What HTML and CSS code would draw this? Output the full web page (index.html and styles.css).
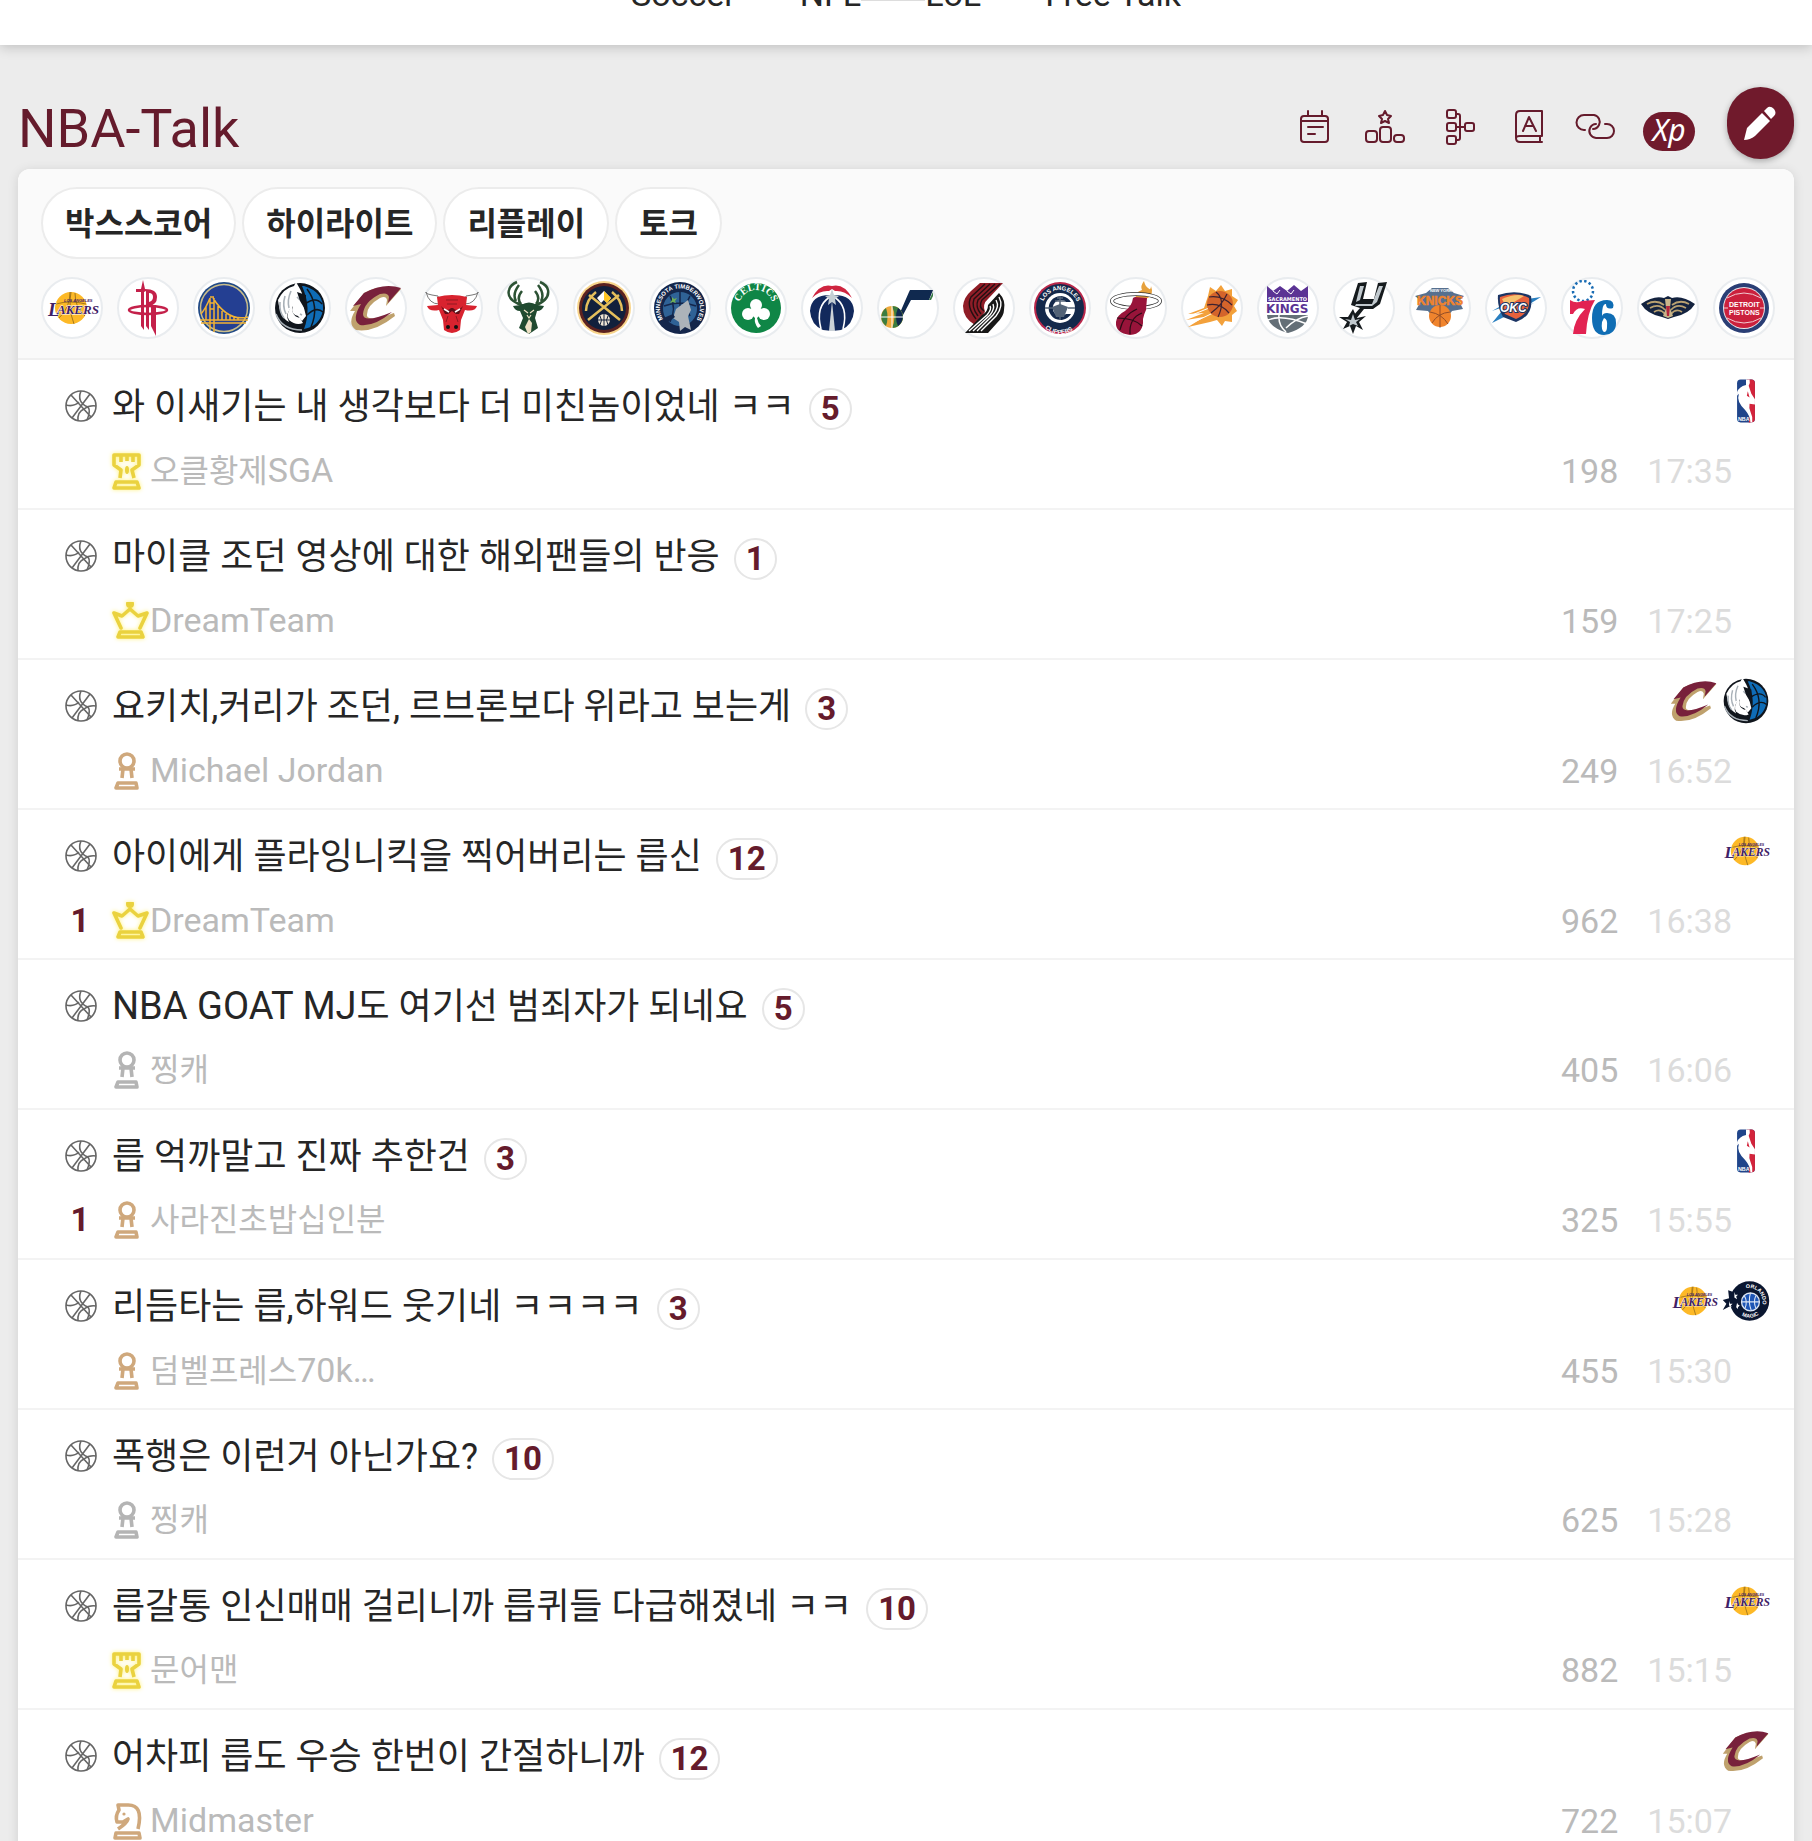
FILE: index.html
```
<!DOCTYPE html>
<html lang="ko">
  <head>
    <meta charset="utf-8">
    <meta name="viewport" content="width=device-width, initial-scale=1.0">
    <title>NBA-Talk</title>
    <link rel="stylesheet" href="styles.css">
  </head>
  <body>
    <!-- 목록 아이콘 -->
    <svg class="sprite" width="0" height="0" aria-hidden="true">
      <symbol id="ball" viewBox="0 0 32 32">
        <g fill="none" stroke="#666" stroke-width="1.6">
          <circle cx="16" cy="16" r="15"/>
          <path d="M6 5L26 27M25 4L7 28M16 1C13 8 15 14 23 17Q26 21 22 30M1 15Q9 17 14 12M13 31Q12 22 19 19Q24 15 31 16"/>
        </g>
      </symbol>
      <symbol id="rook" viewBox="0 0 38 38">
        <g fill="none" stroke="currentColor" stroke-width="3.6" stroke-linejoin="round">
          <path d="M8 26L9 18L2 13V3H27V13L20 18L22 26M9 3V10M15 3V9M21 3V10"/>
          <path d="M4 30H25L27 36H2Z"/>
        </g>
        <ellipse cx="15" cy="18" rx="2" ry="4" fill="currentColor"/>
      </symbol>
      <symbol id="queen" viewBox="0 2 38 38">
        <g fill="none" stroke="currentColor" stroke-width="3.6" stroke-linejoin="round" stroke-linecap="round">
          <path d="M9 28L2 13L10 16L18 9L26 16L35 13L28 28"/>
          <path d="M8 32H29L31 37H6Z"/>
        </g>
        <circle cx="18" cy="4" r="4" fill="currentColor"/>
      </symbol>
      <symbol id="pawn" viewBox="0 0 38 38">
        <g fill="none" stroke="currentColor" stroke-width="3.6" stroke-linejoin="round">
          <circle cx="15" cy="9" r="7"/>
          <path d="M7 17H23M11 17L10 26M19 17L20 26M6 31H24L25 36H4Z"/>
        </g>
      </symbol>
      <symbol id="knight" viewBox="0 0 38 38">
        <g fill="none" stroke="currentColor" stroke-width="3.6" stroke-linejoin="round">
          <path d="M26 27Q32 2 15 3H6L7 8Q3 14 5 20H11L16 17Q15 21 6 27M4 31H27L28 36H3Z"/>
        </g>
        <circle cx="12" cy="12" r="1.6" fill="currentColor"/>
      </symbol>
    </svg>

    <header class="top">
      <nav>
        <a href="#soccer">Soccer</a>
        <a href="#nfl" class="line">NFL</a>
        <a href="#lol">LoL</a>
        <a href="#free">Free Talk</a>
      </nav>
    </header>

    <main>
      <div class="board-head">
        <h1>NBA-Talk</h1>
        <div class="tools">
          <a href="#schedule" aria-label="일정">
            <svg width="40" height="40" viewBox="3 0 40 40"><path d="M9 11Q6 11 6 14V34Q6 37 9 37H30Q33 37 33 34V14Q33 11 30 11ZM6 16H33M13 6V10M27 6V10M13 22H28M13 29H20"/></svg>
          </a>
          <a href="#rank" aria-label="순위">
            <svg width="40" height="40" viewBox="2 0 40 40"><rect x="1" y="26" width="11" height="11" rx="3"/><rect x="15" y="22" width="11" height="15" rx="3"/><rect x="29" y="30" width="10" height="7" rx="3"/><path d="M20 6L22 10L26 11L23 14L24 18L20 16L16 18L17 14L14 11L18 10Z"/></svg>
          </a>
          <a href="#bracket" aria-label="대진표">
            <svg width="40" height="40" viewBox="-4 0 40 40"><rect x="7" y="5" width="9" height="8" rx="2"/><rect x="7" y="18" width="9" height="8" rx="2"/><rect x="7" y="31" width="9" height="8" rx="2"/><rect x="25" y="18" width="9" height="8" rx="2"/><path d="M16 9H18Q20 9 20 11V33Q20 35 18 35H16M16 22H25"/></svg>
          </a>
          <a href="#book" aria-label="용어">
            <svg width="40" height="40" viewBox="-4 0 40 40"><path d="M33 31V6H11Q7 6 7 10V33Q7 37 11 37H33M7 33Q7 31 11 31H33M31 31V37M14 26L20 12L27 26M16 21H24"/></svg>
          </a>
          <a href="#link" aria-label="링크">
            <svg width="40" height="40" viewBox="0 0 40 40"><path d="M11 25H10A7 7 0 0 1 10 10H20A7 7 0 0 1 25 20Q23 24 19 24M31 19H33A7 7 0 0 1 33 33H22A7 7 0 0 1 16 23Q18 19 22 19"/></svg>
          </a>
          <a href="#xp" class="xp">Xp</a>
          <button type="button" class="write" aria-label="글쓰기">
            <svg width="40" height="40" viewBox="0 0 40 40"><path d="M3 37L6 25L21 10L29 18L14 33Q9 37 3 37Z"/><path d="M23 8L26 5Q29 2 33 6Q36 10 33 13L30 16Z"/></svg>
          </button>
        </div>
      </div>

      <section class="board">
        <div class="filters">
          <div class="chips">
            <button type="button">박스스코어</button>
            <button type="button">하이라이트</button>
            <button type="button">리플레이</button>
            <button type="button">토크</button>
          </div>
          <!-- 팀 로고 -->
          <div class="teams">
            <a href="#lakers" aria-label="Lakers"><svg viewBox="0 0 56 56"><g id="lal">
              <circle cx="27" cy="28" r="16" fill="#fdb927"/>
              <path d="M27 12Q24 28 30 44M12 24Q26 20 42 24M15 38Q26 28 26 12M41 36Q31 28 31 13" fill="none" stroke="#7d5a17" stroke-width=".7"/>
              <text x="4" y="36" font-family="Liberation Serif" font-style="italic" font-weight="700" font-size="19" fill="#3f2167" stroke="#fff" stroke-width=".8" paint-order="stroke">L</text>
              <text x="13" y="34" font-family="Liberation Serif" font-style="italic" font-weight="700" font-size="13" fill="#3f2167" stroke="#fff" stroke-width=".8" paint-order="stroke">AKERS</text>
              <text x="20" y="22" font-family="Liberation Sans" font-weight="700" font-style="italic" font-size="4" fill="#3f2167">LOS ANGELES</text>
            </g></svg></a>
            <a href="#rockets" aria-label="Rockets"><svg viewBox="0 0 56 56">
              <g fill="#c4204a">
                <path d="M21 46V12H16V9H21L23 0L25 9Q37 9 37 17Q37 25 29 26V50L26 46V11L24 12V50Z"/>
                <path d="M29 13Q33 13 33 17Q33 21 29 22Z" fill="#fff"/>
                <path d="M31 25H36V56L33 50L31 46Z"/>
              </g>
              <ellipse cx="28" cy="30" rx="19" ry="4" fill="none" stroke="#c4204a" stroke-width="2.500"/>
            </svg></a>
            <a href="#warriors" aria-label="Warriors"><svg viewBox="0 0 56 56">
              <circle cx="28" cy="28" r="26" fill="#214a86"/>
              <circle cx="28" cy="28" r="23.500" fill="#243f92" stroke="#c9bd8b" stroke-width="1.500"/>
              <path d="M4 40H52M5 43H50M14 50V18M18 52V18M14 17H18M14 23H18M14 29H18M17 18Q32 42 52 37M14 18Q10 28 5 34M22 26V40M26 31V40M30 34V40M34 36V40M38 37V40M42 38V40M10 27V40" fill="none" stroke="#f2b233" stroke-width="1.500"/>
            </svg></a>
            <a href="#mavericks" aria-label="Mavericks"><svg viewBox="0 0 56 56"><g id="dal">
              <circle cx="28" cy="28" r="25" fill="#10151c"/>
              <path d="M32 6Q52 12 51 30Q48 46 32 49Q40 28 30 6Z" fill="#0f6cb6"/>
              <path d="M35 9Q48 26 39 47M33 24Q44 16 50 24M35 35Q44 26 51 32" fill="none" stroke="#10151c" stroke-width="1.500"/>
              <path d="M6 20Q12 8 22 6L24 2L28 9Q32 16 31 24L34 36L30 41L26 36Q18 34 21 26Q12 34 17 42Q8 38 6 20Z" fill="#fff"/>
              <path d="M4 34Q10 50 30 50M8 22Q7 32 12 38M13 16Q10 26 14 34M19 11Q15 20 17 28M25 17L28 20M28 34L30 35" fill="none" stroke="#a9b1b8" stroke-width="1.600"/>
              <path d="M21 24Q18 36 28 38L31 43Q24 46 17 40Q13 34 21 24Z" fill="#fff"/>
              <path d="M25 12L34 15L34 31L28 21Z" fill="#10151c"/>
            </g></svg></a>
            <a href="#cavaliers" aria-label="Cavaliers"><svg viewBox="0 0 56 56"><g id="cle">
              <path d="M53 9L38 26L39 20Q38 15 32 18Q18 26 19 36Q21 42 46 33L47 36Q26 53 8 50Q-1 44 7 31L2 31L16 13Q34 3 53 9Z" fill="#bfa16d"/>
              <path d="M53 8L40 23L41 17Q40 12 32 14Q16 22 15 34Q15 44 44 32Q26 47 12 45Q3 40 13 24L5 26L16 13Q36 2 53 8Z" fill="#78213b"/>
            </g></svg></a>
            <a href="#bulls" aria-label="Bulls"><svg viewBox="0 0 56 56">
              <path d="M14 16Q0 14 2 12Q5 24 15 24ZM42 16Q56 14 54 12Q51 24 41 24Z" fill="#fff" stroke="#777" stroke-width="1"/>
              <path d="M13 17Q28 13 43 17L42 25L53 26Q51 32 41 30L37 40L36 50Q28 56 20 50L19 40L15 30Q5 32 3 26L14 25Z" fill="#d8232f"/>
              <path d="M17 26Q23 33 27 28H29Q33 33 39 26L35 34H32L28 31L24 34H21Z" fill="#5e0f17"/>
              <path d="M20 29L25 32M36 29L31 32" stroke="#fff" stroke-width="1.500"/>
              <path d="M22 20H34M23 24H33M24 36L22 42M32 36L34 42" stroke="#911a22" stroke-width="1"/>
              <ellipse cx="24" cy="47" rx="2" ry="2" fill="#111"/><ellipse cx="32" cy="47" rx="2" ry="2" fill="#111"/>
            </svg></a>
            <a href="#bucks" aria-label="Bucks"><svg viewBox="0 0 56 56">
              <g fill="none" stroke="#2c5234" stroke-width="2.500">
                <path d="M24 26Q6 20 9 10Q10 5 17 2M34 26Q50 20 48 10Q47 5 40 2M16 21Q12 14 19 5M41 21Q45 14 38 5M21 24Q16 18 22 11M36 24Q41 18 35 11"/>
              </g>
              <path d="M21 25Q29 20 37 25L44 26Q42 31 37 31L35 38L38 48L29 54L19 48L23 38L20 31Q15 31 13 26Z" fill="#204a30"/>
              <path d="M29 39L32 43L31 52L28 54L25 47Z" fill="#eee1c6"/>
              <path d="M24 30L28 33M34 30L30 33M27 35L29 38L31 35" fill="none" stroke="#eee1c6" stroke-width="1.200"/>
            </svg></a>
            <a href="#nuggets" aria-label="Nuggets"><svg viewBox="0 0 56 56">
              <circle cx="28" cy="28" r="27" fill="#f8d58c"/>
              <circle cx="28" cy="28" r="25" fill="#5c2220"/>
              <circle cx="28" cy="28" r="22" fill="#12203c"/>
              <path d="M21 18L28 11L35 18L31 23L28 20L25 23Z" fill="#fff"/>
              <path d="M28 11L35 18L31 23L28 20Z" fill="#fec524"/>
              <path d="M12 40L43 15M44 40L13 15M10 31Q10 20 20 12M46 31Q46 20 36 12" fill="none" stroke="#e5bf5c" stroke-width="2.500"/>
              <circle cx="28" cy="40" r="6" fill="#efe5d4"/>
              <path d="M28 34V46M22 40H34M24 36Q27 40 24 45M32 36Q29 40 32 45" fill="none" stroke="#12203c" stroke-width="1"/>
            </svg></a>
            <a href="#timberwolves" aria-label="Timberwolves"><svg viewBox="0 0 56 56">
              <circle cx="28" cy="28" r="26" fill="#14264b"/>
              <circle cx="28" cy="29" r="17" fill="#2f6296"/>
              <path d="M28 12V30M12 26Q28 20 44 26M18 16Q25 28 18 42M38 16Q32 25 38 36" fill="none" stroke="#14264b" stroke-width="1.500"/>
              <path d="M36 20L39 30L36 36L39 50L33 47L28 51L27 42L21 38L24 29Z" fill="#adb3b9"/>
              <path d="M9 39L21 34L23 37L16 42Z" fill="#14264b"/>
              <path d="M20 17L22 19L25 18L23 21L24 23L21 22L18 23L20 20Z" fill="#6fae55"/>
              <path id="min-arc" d="M11 39A20 20 0 1 1 39 45" fill="none"/>
              <text font-family="Liberation Sans" font-weight="700" font-size="6" fill="#fff"><textPath href="#min-arc">MINNESOTA TIMBERWOLVES</textPath></text>
            </svg></a>
            <a href="#celtics" aria-label="Celtics"><svg viewBox="0 0 56 56">
              <circle cx="28" cy="28" r="25" fill="#0f8646"/>
              <path id="bos-arc" d="M11 27A17 17 0 0 1 45 27" fill="none"/>
              <text font-family="Liberation Serif" font-weight="700" font-size="10" fill="#fff"><textPath href="#bos-arc" startOffset="5">CELTICS</textPath></text>
              <g fill="#fff">
                <circle cx="28" cy="25" r="6"/><circle cx="20" cy="34" r="6"/><circle cx="36" cy="34" r="6"/>
                <path d="M24 26H32L34 33L29 38Q30 43 33 46L30 48Q26 43 27 38L22 33Z"/>
              </g>
            </svg></a>
            <a href="#wizards" aria-label="Wizards"><svg viewBox="0 0 56 56">
              <path d="M28 15Q49 14 50 31Q49 45 37 50L28 51L19 50Q7 45 6 31Q7 14 28 15Z" fill="#12295c"/>
              <path d="M8 18Q16 3 28 6Q40 3 48 18Q40 10 31 11L28 9L25 11Q16 10 8 18Z" fill="#cf2540"/>
              <path d="M26 17Q11 26 17 49M30 17Q45 26 39 49" fill="none" stroke="#fff" stroke-width="1.600"/>
              <path d="M28 21L31 51H25Z" fill="#cbd2d8"/>
              <path d="M28 9L30 15L35 16L31 19L32 25L28 22L24 25L25 19L21 16L26 15Z" fill="#c4ced4"/>
            </svg></a>
            <a href="#jazz" aria-label="Jazz"><svg viewBox="0 0 56 56">
              <path d="M30 10H53L49 20H31L23 35H19L29 12Z" fill="#10294f"/>
              <path d="M49 20L53 12V16L51 20Z" fill="#367a45"/>
              <circle cx="12" cy="37" r="11" fill="#efa93c"/>
              <path d="M12 26A11 11 0 0 1 12 48Q17 37 12 26Z" fill="#3c7d3f"/>
              <path d="M18 28A11 11 0 0 1 18 46Q14 37 18 28Z" fill="#10294f"/>
              <path d="M6 28A11 11 0 0 0 6 46Q9 37 6 28Z" fill="#3c7d3f"/>
              <path d="M1 37H23M12 26V48" stroke="#fff" stroke-width="1"/>
            </svg></a>
            <a href="#blazers" aria-label="Trail Blazers"><svg viewBox="0 0 56 56">
              <path d="M24 3H47L32 19Q26 24 29 32L19 45Q7 38 7 26Q8 17 15 11Z" fill="#8f1d27"/>
              <path d="M32 25L43 13Q50 20 48 30Q48 36 41 43L32 53H9L26 35Q32 32 32 25Z" fill="#181818"/>
              <path d="M29 4L15 17Q10 26 20 39M34 4L18 19Q15 27 22 36M39 4L22 20Q19 27 25 34M44 4L26 20Q22 27 28 31" fill="none" stroke="#240f12" stroke-width="1.400"/>
              <path d="M43 17Q48 26 40 36L25 51M40 20Q44 27 37 35L21 51M37 24Q39 29 34 35L17 51M34 26Q36 29 31 35L13 51" fill="none" stroke="#fff" stroke-width="1.400"/>
            </svg></a>
            <a href="#clippers" aria-label="Clippers"><svg viewBox="0 0 56 56">
              <circle cx="28" cy="28" r="26" fill="#b9284b"/>
              <circle cx="28" cy="28" r="24" fill="#14294b"/>
              <circle cx="28" cy="28" r="15" fill="#fff"/>
              <path d="M39 22A12 12 0 1 0 39 34H34A8 8 0 1 1 34 22Z" fill="#14294b"/>
              <path d="M20 27L28 24L36 27L32 37H24Z" fill="#536377"/>
              <path d="M28 16V40M23 21H33M25 18H31M13 28H20M36 28H43" stroke="#536377" stroke-width="1.500"/>
              <path id="lac-top" d="M10 28A18 18 0 0 1 46 28" fill="none"/>
              <path id="lac-low" d="M6 32A22 22 0 0 0 50 32" fill="none"/>
              <text font-family="Liberation Sans" font-weight="700" font-size="6" fill="#fff"><textPath href="#lac-top" startOffset="7">LOS ANGELES</textPath></text>
              <text font-family="Liberation Sans" font-weight="700" font-size="6" fill="#fff"><textPath href="#lac-low" startOffset="18">CLIPPERS</textPath></text>
            </svg></a>
            <a href="#heat" aria-label="Heat"><svg viewBox="0 0 56 56">
              <path d="M28 20Q26 12 34 10Q32 6 36 1Q37 6 40 8Q43 11 43 6Q46 14 40 18Z" fill="#e6a13d"/>
              <ellipse cx="28" cy="21" rx="24" ry="7" fill="none" stroke="#333" stroke-width="4"/>
              <ellipse cx="28" cy="21" rx="24" ry="7" fill="none" stroke="#fff" stroke-width="2.500"/>
              <path d="M27 17L39 18L38 30Q36 34 35 39Q36 54 22 55Q7 53 8 42Q9 35 17 31Q24 26 25 18Z" fill="#98143a"/>
              <path d="M9 38Q26 38 34 46M12 50Q15 35 29 29M22 54Q21 38 34 33" fill="none" stroke="#2a0b15" stroke-width="1.200"/>
            </svg></a>
            <a href="#suns" aria-label="Suns"><svg viewBox="0 0 56 56">
              <path d="M24 16L26 7L32 11L37 5L41 11L48 9L48 16L54 20L50 26L53 31L48 35V42L41 41L38 46L33 40L26 42L4 47L20 37L2 40L20 33L4 34L20 28Z" fill="#f3a13b"/>
              <path d="M6 44L29 33M3 37L25 28" stroke="#fff" stroke-width="1"/>
              <circle cx="36" cy="24" r="13" fill="#d4642b"/>
              <path d="M25 17Q38 15 48 25M23 25Q36 22 45 33M32 12Q42 20 34 37M43 14Q38 25 27 33" fill="none" stroke="#3c2230" stroke-width="1.200"/>
            </svg></a>
            <a href="#kings" aria-label="Kings"><svg viewBox="0 0 56 56">
              <path d="M7 6L13 11L20 6L27 11L34 5L41 11L48 6V22H7Z" fill="#5b3394"/>
              <path d="M13 11L17 14L20 10M27 11L31 14L34 10" fill="none" stroke="#fff" stroke-width="1"/>
              <text x="8" y="21" font-family="DejaVu Sans" font-weight="700" font-size="5" fill="#fff">SACRAMENTO</text>
              <text x="6" y="33" font-family="DejaVu Sans" font-weight="700" font-size="12" fill="#5b3394">KINGS</text>
              <path d="M7 35H48Q48 47 28 53Q8 47 7 35Z" fill="#646f77"/>
              <path d="M8 40Q22 34 47 44M19 35Q18 45 26 52M48 36Q36 38 26 48" fill="none" stroke="#fff" stroke-width="1.500"/>
            </svg></a>
            <a href="#spurs" aria-label="Spurs"><svg viewBox="0 0 56 56">
              <path d="M22 3L31 2L27 19H38L42 3L51 2L44 24L37 29H28L20 39L17 36L24 28L15 25Z" fill="#151a1d"/>
              <path d="M24 6H28L24 20L20 22ZM43 6H47L41 22L36 26H19L20 24H36Z" fill="#c1c9ce"/>
              <path d="M17 29L21 38L30 36L23 42L27 50L20 46L17 54L14 46L7 49L11 42L3 37L12 37Z" fill="#151a1d"/>
              <path d="M17 34L19 40L24 39L20 42L22 46L17 44L13 46L14 42L9 39L15 40Z" fill="#c1c9ce"/>
            </svg></a>
            <a href="#knicks" aria-label="Knicks"><svg viewBox="0 0 56 56">
              <path d="M3 16L14 13L20 8H36L42 13L52 16L47 21L51 29L40 31L28 48L16 31L4 30L9 21Z" fill="#56708f"/>
              <circle cx="28" cy="36" r="11" fill="#f0842d"/>
              <path d="M28 25V47M18 32Q30 34 36 44M38 32Q26 33 20 43" fill="none" stroke="#934d27" stroke-width="1"/>
              <text x="5" y="25" font-family="Liberation Sans" font-weight="700" font-size="12" fill="#ef832e" stroke="#ef832e" stroke-width=".600">KNICKS</text>
              <text x="18" y="12" font-family="Liberation Sans" font-weight="700" font-size="4" fill="#fff">NEW YORK</text>
            </svg></a>
            <a href="#thunder" aria-label="Thunder"><svg viewBox="0 0 56 56">
              <path d="M4 43L18 26L4 31L20 22L53 17L40 25L46 23L18 36Z" fill="#2a7fc0"/>
              <path d="M10 15Q28 9 43 16Q46 36 28 42L15 37Q9 26 10 15Z" fill="#1c3564"/>
              <path d="M12 17Q28 11 41 18Q43 33 28 39L17 34Q11 26 12 17Z" fill="#e8613c"/>
              <path d="M14 19Q28 13 36 16L18 27Z" fill="#f6c26f"/>
              <text x="12" y="32" font-family="Liberation Sans" font-style="italic" font-weight="700" font-size="12" fill="#fff" stroke="#1c3564" stroke-width="2" paint-order="stroke">OKC</text>
            </svg></a>
            <a href="#sixers" aria-label="76ers"><svg viewBox="0 0 56 56">
              <circle cx="19" cy="11" r="10" fill="none" stroke="#1b6db4" stroke-width="2.500" stroke-dasharray="2.400 2.400"/>
              <path d="M6 20Q12 24 18 21L31 20Q23 33 22 54H9Q10 40 21 29Q13 26 9 34H6Z" fill="#e22352"/>
              <path d="M49 28Q51 20 43 20Q28 20 28 38Q28 55 40 55Q52 54 52 43Q52 33 43 33Q39 33 38 36Q38 23 42 24Q42 30 49 28ZM40 38Q44 39 43 47Q43 52 40 52Q37 50 38 42Z" fill="#0f6db4" fill-rule="evenodd"/>
            </svg></a>
            <a href="#pelicans" aria-label="Pelicans"><svg viewBox="0 0 56 56">
              <path d="M1 24Q14 15 24 18L28 16L32 18Q42 15 55 24Q49 34 34 37L28 39L22 37Q7 34 1 24Z" fill="#14233f"/>
              <path d="M7 24Q16 19 24 25M10 28Q19 23 25 30M14 32Q20 28 25 34M49 24Q40 19 32 25M46 28Q37 23 31 30M42 32Q36 28 31 34" fill="none" stroke="#b8a070" stroke-width="1.800"/>
              <path d="M25 19H31L30 28L33 36L28 38L23 36L26 28Z" fill="#c9b58b"/>
              <path d="M26 26H30L29 36H27Z" fill="#b3263d"/>
            </svg></a>
            <a href="#pistons" aria-label="Pistons"><svg viewBox="0 0 56 56">
              <circle cx="28" cy="28" r="25" fill="#2a3e75"/>
              <circle cx="28" cy="28" r="21" fill="#e8e4e8"/>
              <circle cx="28" cy="28" r="20" fill="#cb203c"/>
              <path d="M11 18Q28 8 45 18M11 38Q28 48 45 38M8 28H12M44 28H48" fill="none" stroke="#f2c9d0" stroke-width="1"/>
              <g font-family="Liberation Sans" font-weight="700" font-size="7" fill="#fff"><text x="13" y="27">DETROIT</text><text x="13" y="35">PISTONS</text></g>
            </svg></a>
          </div>
        </div>

        <ul class="posts">
          <li>
            <div class="subject">
              <svg class="ball"><use href="#ball"/></svg>
              <a href="#p1">와 이새기는 내 생각보다 더 미친놈이었네 ㅋㅋ</a><span class="reply">5</span>
              <span class="logos"><svg viewBox="0 0 56 56"><g id="nba">
                <rect x="18" y="4" width="20" height="48" rx="4" fill="#20458a"/>
                <path d="M29 4H34Q38 4 38 8V48Q38 52 34 52H31L33 42L30 30Z" fill="#d3233b"/>
                <path d="M28 4H32Q33 8 31 11L34 20L38 26V32L32 31Q31 36 33 40Q36 46 35 52H33Q33 45 27 38Q17 29 20 20L18 22V18Q20 12 28 10Z" fill="#fff"/>
                <path d="M30 17L32 24L29 22Z" fill="#d3233b"/>
                <text x="19" y="50" font-family="Liberation Sans" font-weight="700" font-size="6" fill="#fff">NBA</text>
              </g></svg></span>
            </div>
            <div class="info">
              <b class="vote"></b><svg class="rank gold"><use href="#rook"/></svg><span class="name">오클황제<span class="en">SGA</span></span>
              <span class="views">198</span><time>17:35</time>
            </div>
          </li>
          <li>
            <div class="subject">
              <svg class="ball"><use href="#ball"/></svg>
              <a href="#p2">마이클 조던 영상에 대한 해외팬들의 반응</a><span class="reply">1</span>
            </div>
            <div class="info">
              <b class="vote"></b><svg class="rank gold"><use href="#queen"/></svg><span class="name"><span class="en">DreamTeam</span></span>
              <span class="views">159</span><time>17:25</time>
            </div>
          </li>
          <li>
            <div class="subject">
              <svg class="ball"><use href="#ball"/></svg>
              <a href="#p3">요키치,커리가 조던, 르브론보다 위라고 보는게</a><span class="reply">3</span>
              <span class="logos"><svg viewBox="0 0 56 56"><use href="#cle"/></svg><svg viewBox="0 0 56 56"><use href="#dal"/></svg></span>
            </div>
            <div class="info">
              <b class="vote"></b><svg class="rank bronze"><use href="#pawn"/></svg><span class="name"><span class="en">Michael Jordan</span></span>
              <span class="views">249</span><time>16:52</time>
            </div>
          </li>
          <li>
            <div class="subject">
              <svg class="ball"><use href="#ball"/></svg>
              <a href="#p4">아이에게 플라잉니킥을 찍어버리는 릅신</a><span class="reply">12</span>
              <span class="logos"><svg viewBox="0 0 56 56"><use href="#lal"/></svg></span>
            </div>
            <div class="info">
              <b class="vote">1</b><svg class="rank gold"><use href="#queen"/></svg><span class="name"><span class="en">DreamTeam</span></span>
              <span class="views">962</span><time>16:38</time>
            </div>
          </li>
          <li>
            <div class="subject">
              <svg class="ball"><use href="#ball"/></svg>
              <a href="#p5"><span class="en">NBA GOAT MJ</span>도 여기선 범죄자가 되네요</a><span class="reply">5</span>
            </div>
            <div class="info">
              <b class="vote"></b><svg class="rank silver"><use href="#pawn"/></svg><span class="name">찡캐</span>
              <span class="views">405</span><time>16:06</time>
            </div>
          </li>
          <li>
            <div class="subject">
              <svg class="ball"><use href="#ball"/></svg>
              <a href="#p6">릅 억까말고 진짜 추한건</a><span class="reply">3</span>
              <span class="logos"><svg viewBox="0 0 56 56"><use href="#nba"/></svg></span>
            </div>
            <div class="info">
              <b class="vote">1</b><svg class="rank bronze"><use href="#pawn"/></svg><span class="name">사라진초밥십인분</span>
              <span class="views">325</span><time>15:55</time>
            </div>
          </li>
          <li>
            <div class="subject">
              <svg class="ball"><use href="#ball"/></svg>
              <a href="#p7">리듬타는 릅,하워드 웃기네 ㅋㅋㅋㅋ</a><span class="reply">3</span>
              <span class="logos"><svg viewBox="0 0 56 56"><use href="#lal"/></svg><svg viewBox="0 0 56 56">
                <circle cx="32" cy="28" r="22" fill="#0a1630"/>
                <path d="M8 16L14 18L18 14L20 21L14 26L12 30L16 34L10 34L2 38L6 31L2 27L9 25Z" fill="#0a1630"/>
                <path d="M15 18L16 21L19 21L17 23L18 26L15 24ZM9 28L10 31L13 31L11 33L12 35L9 33ZM18 30L19 32L21 33L19 35V37L17 35Z" fill="#fff"/>
                <circle cx="33" cy="29" r="10" fill="#1d55b5" stroke="#dce6f5" stroke-width="1.500"/>
                <path d="M23 29H43M33 19Q30 29 34 39M26 22Q30 28 27 36M39 22Q36 29 39 36" fill="none" stroke="#dce6f5" stroke-width="1.200"/>
                <path id="orl-top" d="M28 14A15 15 0 0 1 46 33" fill="none"/>
                <path id="orl-low" d="M18 40A18 18 0 0 0 46 40" fill="none"/>
                <g font-family="Liberation Sans" font-weight="700" font-size="6" fill="#fff"><text><textPath href="#orl-top">ORLANDO</textPath></text><text><textPath href="#orl-low" startOffset="7">MAGIC</textPath></text></g>
              </svg></span>
            </div>
            <div class="info">
              <b class="vote"></b><svg class="rank bronze"><use href="#pawn"/></svg><span class="name">덤벨프레스<span class="en">70k…</span></span>
              <span class="views">455</span><time>15:30</time>
            </div>
          </li>
          <li>
            <div class="subject">
              <svg class="ball"><use href="#ball"/></svg>
              <a href="#p8">폭행은 이런거 아닌가요?</a><span class="reply">10</span>
            </div>
            <div class="info">
              <b class="vote"></b><svg class="rank silver"><use href="#pawn"/></svg><span class="name">찡캐</span>
              <span class="views">625</span><time>15:28</time>
            </div>
          </li>
          <li>
            <div class="subject">
              <svg class="ball"><use href="#ball"/></svg>
              <a href="#p9">릅갈통 인신매매 걸리니까 릅퀴들 다급해졌네 ㅋㅋ</a><span class="reply">10</span>
              <span class="logos"><svg viewBox="0 0 56 56"><use href="#lal"/></svg></span>
            </div>
            <div class="info">
              <b class="vote"></b><svg class="rank gold"><use href="#rook"/></svg><span class="name">문어맨</span>
              <span class="views">882</span><time>15:15</time>
            </div>
          </li>
          <li>
            <div class="subject">
              <svg class="ball"><use href="#ball"/></svg>
              <a href="#p10">어차피 릅도 우승 한번이 간절하니까</a><span class="reply">12</span>
              <span class="logos"><svg viewBox="0 0 56 56"><use href="#cle"/></svg></span>
            </div>
            <div class="info">
              <b class="vote"></b><svg class="rank bronze"><use href="#knight"/></svg><span class="name"><span class="en">Midmaster</span></span>
              <span class="views">722</span><time>15:07</time>
            </div>
          </li>
        </ul>
      </section>
    </main>
  </body>
</html>
```
FILE: styles.css
```
* {
  box-sizing: border-box;
}
html {
  height: 100%;
  overflow: hidden;
}
body {
  margin: 0;
  height: 100%;
  overflow: hidden;
  background: #ececec;
  color: #262626;
  font-family: Roboto, "Noto Sans CJK KR", sans-serif;
  font-size: 34px;
}
a {
  color: inherit;
  text-decoration: none;
}
button {
  font-family: inherit;
  cursor: pointer;
}
.sprite {
  position: absolute;
}
symbol {
  overflow: visible;
}

/* 상단 메뉴 */
.top {
  display: flex;
  align-items: flex-end;
  justify-content: center;
  height: 45px;
  padding-bottom: 31px;
  background: #fff;
  box-shadow: 0 2px 12px rgba(0, 0, 0, 0.2);
}
.top nav {
  display: flex;
  gap: 64px;
  line-height: 40px;
}
.line {
  position: relative;
}
.line::after {
  content: "";
  position: absolute;
  left: 100%;
  bottom: 13px;
  width: 64px;
  height: 2px;
  background: #ddd;
}

/* 게시판 제목 */
main {
  padding: 0 18px;
}
.board-head {
  display: flex;
  justify-content: space-between;
  height: 124px;
  padding-top: 42px;
}
h1 {
  margin: 0;
  padding-top: 12px;
  font-size: 54px;
  line-height: 60px;
  font-weight: 400;
  color: #651b2c;
}
.tools {
  display: flex;
  align-items: flex-start;
}
.tools a {
  margin: 18px 29px 0 0;
}
.tools svg {
  display: block;
  overflow: visible;
  fill: none;
  stroke: #651b2c;
  stroke-width: 2;
  stroke-linejoin: round;
  stroke-linecap: round;
}
.tools .xp {
  width: 52px;
  height: 39px;
  margin: 25px 32px 0 0;
  border-radius: 20px;
  background: #701a2c;
  color: #fff;
  font-family: "Noto Sans", sans-serif;
  font-size: 30px;
  line-height: 36px;
  font-style: italic;
  text-align: center;
}
.write {
  display: flex;
  align-items: center;
  justify-content: center;
  width: 67px;
  height: 72px;
  padding: 0;
  border: 0;
  border-radius: 36px;
  background: #701a2c;
  box-shadow: 0 2px 6px rgba(0, 0, 0, 0.3);
}
.tools .write svg {
  fill: #fff;
  stroke: none;
}

/* 목록 박스 */
.board {
  border-radius: 12px;
  background: #fff;
  box-shadow: 0 2px 12px rgba(0, 0, 0, 0.12);
}
.filters {
  padding: 18px 18px 19px 23px;
  border-bottom: 2px solid #f0f0f0;
  border-radius: 12px 12px 0 0;
  background: #fafafa;
}
.chips {
  display: flex;
  gap: 6px;
}
.chips button {
  height: 72px;
  padding: 0 22px 4px;
  border: 2px solid #ececec;
  border-radius: 36px;
  background: #fff;
  color: #262626;
  font-size: 32px;
  font-weight: 700;
}
.teams {
  display: flex;
  gap: 14px;
  margin-top: 18px;
  overflow: hidden;
}
.teams a {
  display: flex;
  flex: none;
  align-items: center;
  justify-content: center;
  width: 62px;
  height: 62px;
  border: 2px solid #e9ecef;
  border-radius: 50%;
  background: #fff;
}
.teams svg {
  flex: none;
  width: 56px;
  height: 56px;
}
.posts {
  margin: 0;
  padding: 0;
  list-style: none;
}
.posts li {
  height: 150px;
  padding: 16px 23px 0 44px;
  border-bottom: 2px solid #f3f3f3;
}
.subject {
  display: flex;
  align-items: flex-end;
  height: 54px;
  font-size: 36px;
  line-height: 46px;
}
.subject .en {
  font-size: 38px;
}
.ball {
  width: 32px;
  height: 32px;
  margin: 0 15px 8px 3px;
}
.reply {
  height: 42px;
  margin-left: 14px;
  padding: 0 10px;
  border: 2px solid #e6e6e6;
  border-radius: 21px;
  color: #651b2c;
  font-size: 33px;
  line-height: 38px;
  font-weight: 700;
}
.logos {
  display: flex;
  align-self: flex-start;
  gap: 2px;
  margin-left: auto;
}
.logos svg {
  width: 50px;
  height: 50px;
}
.info {
  display: flex;
  align-items: center;
  margin-top: 16px;
  line-height: 48px;
}
.vote {
  width: 36px;
  margin-right: 14px;
  color: #651b2c;
  font-size: 33px;
  text-align: center;
}
.rank {
  width: 38px;
  height: 38px;
}
.gold {
  color: #ead23f;
  filter: drop-shadow(0 0 2px #fff27a);
}
.bronze {
  color: #cfa87c;
}
.silver {
  color: #b4b4b4;
}
.name {
  color: #bababa;
  font-size: 32px;
}
.name .en {
  font-size: 34px;
}
.views {
  margin-left: auto;
  color: #bababa;
}
time {
  margin: 0 39px 0 29px;
  color: #dcdcdc;
}
```
